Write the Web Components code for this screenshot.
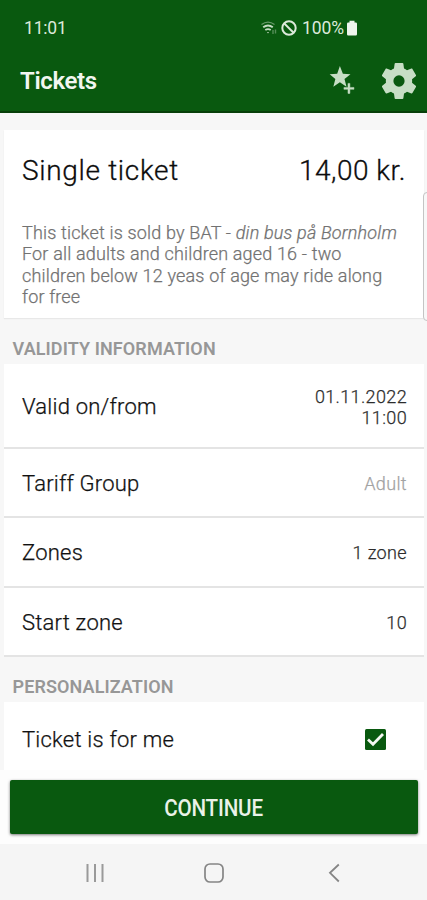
<!DOCTYPE html>
<html lang="en"><head><meta charset="utf-8"><title>Tickets</title>
<style>
html,body{margin:0;height:100%;background:#f7f7f7}
body{font-family:Roboto,"Noto Sans",sans-serif;color:#161616;width:427px;height:900px;overflow:hidden}
</style></head><body>
<ticket-app></ticket-app>
<script>
const define = (name, html) => customElements.define(name, class extends HTMLElement {
  constructor() { super(); this.attachShadow({mode:'open'}).innerHTML = html; }
});

define('status-bar', `<style>
:host{display:flex;align-items:center;height:56px;padding:0 69px 0 24px;color:#dce9da;font-size:17.5px;line-height:20px}
.time{flex:1;letter-spacing:-.2px}
.pct{letter-spacing:-.1px;margin:0 2px 0 5px}
.wifi{margin-right:2px}
svg{display:block;flex:none}
</style>
<span class="time">11:01</span>
<svg class="wifi" width="19" height="16" viewBox="0 0 19 16" fill="none" stroke="#c5dbc3"><path d="M1.500 4.600Q8 -.4 14.500 4.600" stroke-width="1.200" opacity=".5"/><path d="M3.200 7.200Q8 3.700 12.800 7.200" stroke-width="2"/><path d="M5.300 10Q8 8.100 10.700 10" stroke-width="1.800"/><path d="M7 12h2l-1 1.500z" fill="#c5dbc3" stroke="none"/><path d="M13 10v4M15.500 9.500v4" opacity=".4" stroke-width="1.400"/></svg>
<svg width="16" height="16" viewBox="0 0 16 16" fill="none" stroke="#dce9da" stroke-width="2"><circle cx="8" cy="8" r="6.700"/><path d="M3.300 3.500l9.300 9.200"/></svg>
<span class="pct">100%</span>
<svg width="12" height="16" viewBox="0 0 12 16" fill="#eff5ed"><path d="M3.500 .8h5v1.700h1.300q1.200 0 1.200 1.200v10.600q0 1.200-1.200 1.200H2.200Q1 15.500 1 14.300V3.700q0-1.200 1.200-1.200h1.300z"/></svg>`);

define('app-header', `<style>
:host{display:block;height:113px;box-sizing:border-box;background:#09590f;border-bottom:2px solid #073f0a}
.bar{display:flex;align-items:center;height:50px;padding:0 11px 0 20px}
h1{margin:0;flex:1;font-size:24px;line-height:28px;font-weight:600;color:#f2f6f0;letter-spacing:-.35px}
svg{display:block}
.star{margin-right:27px;margin-top:-1px}
</style>
<status-bar></status-bar>
<div class="bar"><h1><slot></slot></h1>
<svg class="star" width="26" height="29" viewBox="0 0 27 30" fill="#c7dec5"><path d="M11.300 0l3.100 7.900 7.900.5-6.200 5 2.100 8-6.900-4.500-6.800 4.500 2.100-8L.7 8.400l7.800-.5z"/><path d="M19.700 18h2v4.200h4.200v2h-4.200v4.200h-2v-4.200h-4.200v-2h4.200z" stroke="#c7dec5" stroke-width=".5"/></svg>
<svg width="34" height="36" viewBox="2.300 2 19.400 20" preserveAspectRatio="none" fill="#c7dec5"><path d="M19.430 12.980c.04-.32.070-.64.070-.98s-.03-.66-.07-.98l2.110-1.650c.19-.15.240-.42.120-.64l-2-3.460c-.12-.22-.39-.3-.61-.22l-2.490 1c-.52-.4-1.080-.73-1.690-.98l-.38-2.650C14.460 2.180 14.250 2 14 2h-4c-.25 0-.46.180-.49.420l-.38 2.650c-.61.250-1.170.590-1.690.98l-2.490-1c-.23-.09-.49 0-.61.220l-2 3.460c-.13.220-.07.490.120.640l2.110 1.650c-.04.320-.07.650-.07.980s.03.660.070.98l-2.110 1.650c-.19.150-.24.420-.12.640l2 3.460c.12.220.39.300.61.220l2.490-1c.52.400 1.080.730 1.690.98l.38 2.650c.03.240.24.420.49.420h4c.25 0 .46-.18.490-.42l.38-2.650c.61-.25 1.170-.59 1.690-.98l2.490 1c.23.090.49 0 .61-.22l2-3.460c.12-.22.070-.49-.12-.64l-2.110-1.650zM12 15.200a3.200 3.200 0 1 1 0-6.400 3.200 3.200 0 0 1 0 6.400z"/></svg></div>`);

define('ticket-card', `<style>
:host{display:block;box-sizing:border-box;margin:17px 3px 0 4px;height:188px;padding:25px 18px 0 18px;background:#fff;box-shadow:0 1px 1px #e8e8e8}
.top{display:flex;justify-content:space-between;font-size:28px;line-height:32px;color:#0c0c0c;font-weight:300;-webkit-text-stroke:.3px}
.name{letter-spacing:.68px}
.price{letter-spacing:.5px}
.desc{margin-top:35px;font-size:18px;line-height:21.330px;color:#727272;font-weight:300;-webkit-text-stroke:.25px;white-space:nowrap;letter-spacing:.165px}
</style>
<div class="top"><span class="name"><slot name="name"></slot></span><span class="price"><slot name="price"></slot></span></div>
<div class="desc"><slot></slot></div>`);

define('section-title', `<style>
:host{display:block;box-sizing:border-box;height:46px;padding:20px 0 0 12.500px;font-size:18px;line-height:22px;font-weight:600;color:#979797;letter-spacing:.1px}
</style><slot></slot>`);

define('setting-row', `<style>
:host{display:flex;align-items:center;justify-content:space-between;box-sizing:border-box;height:69.300px;margin:0 3px 0 4px;padding:2px 17px 0 18px;background:#fff;border-bottom:2px solid #e4e4e4;font-size:22px;font-weight:300;-webkit-text-stroke:.25px;color:#111}
.label{letter-spacing:.22px}
.value{font-size:18px;line-height:21px;text-align:right;color:#2c2c2c;letter-spacing:.36px}
:host([muted]) .value{color:#a3a3a3}
:host([tall]){height:85px;padding-top:2px}
:host([last]){border-bottom:0;padding-bottom:0;padding-top:0;height:75px}
</style>
<span class="label"><slot name="label"></slot></span><span class="value"><slot></slot></span>`);

define('check-box', `<style>
:host{display:block;width:21px;height:21px;margin-right:21px}
svg{display:block}
</style><svg width="21" height="21" viewBox="0 0 21 21"><rect width="21" height="21" rx="1.500" fill="#09590f"/><path d="M3 10.600l5 4.700L18 5" fill="none" stroke="#f5f8f3" stroke-width="2.800"/></svg>`);

define('action-footer', `<style>
:host{display:block;box-sizing:border-box;height:74px;padding:10px 9px 10px 10px;background:#fdfdfd}
button{display:block;width:100%;height:54px;padding:1px 0 0;border:0;border-radius:2px;background:#09590f;box-shadow:0 1px 3px #777;color:#eaf2e8;font:500 24px Roboto,sans-serif}
span{display:inline-block;letter-spacing:-.2px;transform:scaleX(.858)}
</style><button><span><slot></slot></span></button>`);

define('nav-bar', `<style>
:host{display:flex;height:56px;background:#f5f5f5;align-items:center;padding:2px 0 0 85px;box-sizing:border-box}
svg{display:block}
.home{margin:0 104px 0 99px}
</style>
<svg width="20" height="20" viewBox="0 0 20 20" stroke="#9a9a9a" stroke-width="2"><path d="M2.500 1v18M10 1v18M17.500 1v18"/></svg>
<svg class="home" width="20" height="20" viewBox="0 0 20 20" fill="none" stroke="#858585" stroke-width="1.700"><rect x="1" y="1" width="18" height="18" rx="5"/></svg>
<svg width="12" height="20" viewBox="0 0 12 20" fill="none" stroke="#858585" stroke-width="1.800"><path d="M10.800 1.500L2 9.800l8.800 8.700"/></svg>`);

define('ticket-app', `<style>
:host{display:flex;flex-direction:column;position:relative;width:427px;height:900px;overflow:hidden;background:#f7f7f7}
app-header,action-footer,nav-bar{flex:none}
main{display:flow-root;flex:1;min-height:0;overflow:hidden}
.second{height:45px;padding-top:19px}
.handle{position:absolute;left:423px;top:192px;width:20px;height:127px;border:1.500px solid #c4c4c4;border-radius:4px;background:#f8f8f8}
</style>
<app-header>Tickets</app-header>
<main>
<ticket-card><span slot="name">Single ticket</span><span slot="price">14,00 kr.</span>This ticket is sold by BAT - <i>din bus på Bornholm</i><br>For all adults and children aged 16 - two<br>children below 12 yeas of age may ride along<br>for free</ticket-card>
<section-title>VALIDITY INFORMATION</section-title>
<setting-row tall><span slot="label">Valid on/from</span>01.11.2022<br>11:00</setting-row>
<setting-row muted><span slot="label">Tariff Group</span>Adult</setting-row>
<setting-row><span slot="label">Zones</span>1 zone</setting-row>
<setting-row><span slot="label">Start zone</span>10</setting-row>
<section-title class="second">PERSONALIZATION</section-title>
<setting-row last><span slot="label">Ticket is for me</span><check-box></check-box></setting-row>
</main>
<action-footer>CONTINUE</action-footer>
<nav-bar></nav-bar>
<div class="handle"></div>`);
</script>
</body></html>
